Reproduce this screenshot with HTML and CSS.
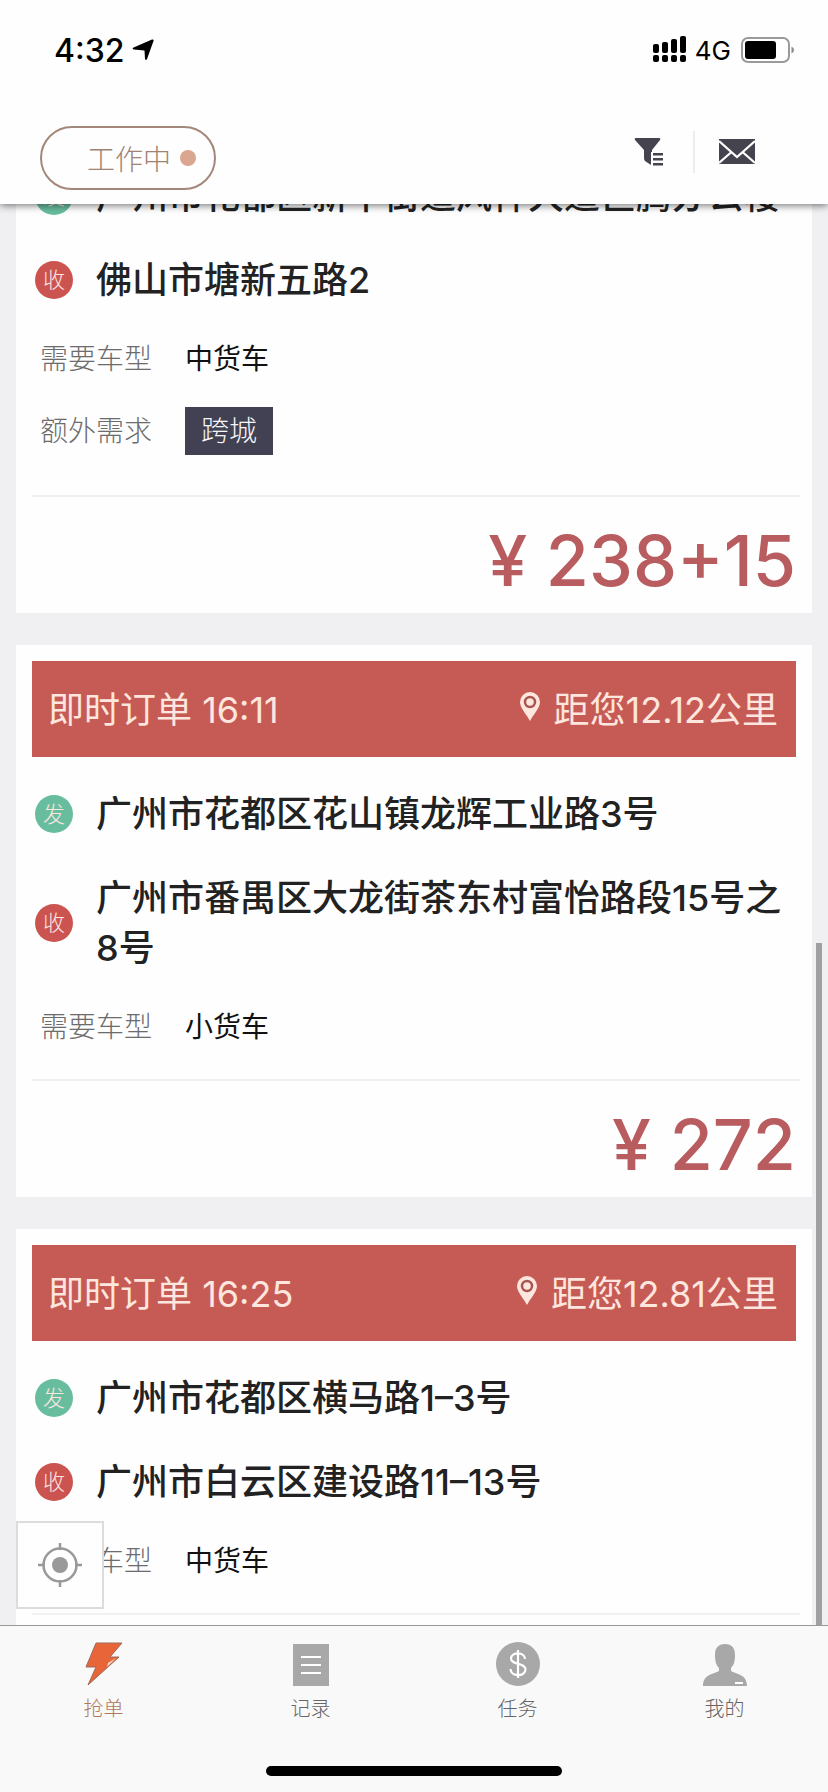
FILE: index.html
```html
<!DOCTYPE html>
<html lang="zh-CN">
<head>
<meta charset="utf-8">
<meta name="viewport" content="width=device-width, initial-scale=1">
<title>抢单</title>
<link rel="stylesheet" href="styles.css">
</head>
<body>
<div class="app">
  <header class="top">
    <div class="status">
      <span class="time">4:32</span>
      <svg class="arrow" width="22" height="22" viewBox="0 0 22 22"><path d="M20 .500Q22 0 21.500 2L15 20Q14 22 13 20L12.500 11.500 1.800 10.500Q-.500 9.500 1.600 8.400Z"/></svg>
      <svg class="signal" width="34" height="28" viewBox="0 0 34 28"><rect x="0" y="8" width="6" height="9" rx="2"/><rect x="9" y="6" width="6" height="11" rx="2"/><rect x="18" y="3" width="6" height="14" rx="2"/><rect x="27" y="0" width="6" height="17" rx="2"/><rect x="0" y="19" width="6" height="7" rx="2"/><rect x="9" y="19" width="6" height="7" rx="2"/><rect x="18" y="19" width="6" height="7" rx="2"/><rect x="27" y="19" width="6" height="7" rx="2"/></svg>
      <span class="network">4G</span>
      <svg width="54" height="26" viewBox="0 0 54 26"><rect x="1" y="1" width="47" height="24" rx="6" fill="#fff" stroke="#9a9a9a" stroke-width="2"/><rect x="4" y="4" width="31" height="18" rx="3"/><path d="M50.500 9.500Q53 10.500 53 13T50.500 16.500Z" fill="#8a8a8a"/></svg>
    </div>
    <div class="toolbar">
      <button class="work" type="button">工作中<span class="dot"></span></button>
      <button class="tool" type="button" aria-label="筛选"><svg width="30" height="30" viewBox="0 0 30 30" fill="#45434e"><path d="M2 1H25Q27 1 26 3L18 13V15H17V28L11 24Q10 23 10 21V13L1 3Q0 1 2 1Z"/><path d="M19 16H29V18.500H19ZM19 21H29V23.500H19ZM19 26H29V28.500H19Z"/></svg></button>
      <span class="rule"></span>
      <button class="tool" type="button" aria-label="消息"><svg width="36" height="26" viewBox="0 0 36 26"><path d="M0 0H36V25H0Z" fill="#45434e"/><path d="M0 2 18 18 36 2M0 24 12.500 13M36 24 23.500 13" fill="none" stroke="#fff" stroke-width="2.200"/></svg></button>
    </div>
  </header>

  <main class="feed">
    <div class="list">
      <article class="card card-first">
        <div class="stops">
          <div class="stop"><span class="badge from">发</span><p class="addr">广州市花都区新华街道风神大道巨腾办公楼</p></div>
          <div class="stop"><span class="badge to">收</span><p class="addr">佛山市塘新五路2</p></div>
        </div>
        <dl class="meta">
          <div class="row"><dt>需要车型</dt><dd>中货车</dd></div>
          <div class="row row-tags"><dt>额外需求</dt><dd><span class="tag">跨城</span></dd></div>
        </dl>
        <p class="price">¥ 238+15</p>
      </article>

      <article class="card">
        <h2 class="head"><span>即时订单 16:11</span><span class="dist"><svg width="20" height="30" viewBox="0 0 20 30"><path d="M10 0A10 10 0 0 1 20 10C20 16 13 23 10 29C7 23 0 16 0 10A10 10 0 0 1 10 0Z" fill="#fde6de"/><circle cx="10" cy="10" r="5" fill="none" stroke="#a8564f" stroke-width="2.500"/></svg>距您12.12公里</span></h2>
        <div class="stops">
          <div class="stop"><span class="badge from">发</span><p class="addr">广州市花都区花山镇龙辉工业路3号</p></div>
          <div class="stop"><span class="badge to">收</span><p class="addr">广州市番禺区大龙街茶东村富怡路段15号之8号</p></div>
        </div>
        <dl class="meta">
          <div class="row"><dt>需要车型</dt><dd>小货车</dd></div>
        </dl>
        <p class="price">¥ 272</p>
      </article>

      <article class="card">
        <h2 class="head"><span>即时订单 16:25</span><span class="dist"><svg width="20" height="30" viewBox="0 0 20 30"><path d="M10 0A10 10 0 0 1 20 10C20 16 13 23 10 29C7 23 0 16 0 10A10 10 0 0 1 10 0Z" fill="#fde6de"/><circle cx="10" cy="10" r="5" fill="none" stroke="#a8564f" stroke-width="2.500"/></svg>距您12.81公里</span></h2>
        <div class="stops">
          <div class="stop"><span class="badge from">发</span><p class="addr">广州市花都区横马路1–3号</p></div>
          <div class="stop"><span class="badge to">收</span><p class="addr">广州市白云区建设路11–13号</p></div>
        </div>
        <dl class="meta">
          <div class="row"><dt>需要车型</dt><dd>中货车</dd></div>
        </dl>
        <div class="price"></div>
      </article>
    </div>
    <span class="thumb"></span>
    <button class="locate" type="button" aria-label="定位"><svg width="46" height="46" viewBox="0 0 46 46"><circle cx="23" cy="23" r="16.500" fill="none" stroke="#999" stroke-width="2.500"/><circle cx="23" cy="23" r="8" fill="#999"/><path d="M23 1V8M23 38V45M1 23H8M38 23H45" stroke="#999" stroke-width="2.500"/></svg></button>
  </main>

  <footer class="bottom">
    <nav class="tabs">
      <a class="tab active" href="#"><svg width="44" height="44" viewBox="0 0 44 44"><path d="M14 1H40L28 15H37L6 43L14 25H4Z" fill="#e8653a" stroke="#9c6c58" stroke-width="1"/><path d="M26 21 34 16 25 25" fill="#fbd9c8"/></svg>抢单</a>
      <a class="tab" href="#"><svg width="44" height="44" viewBox="0 0 44 44"><path d="M4 2H40V44H4Z" fill="#a8a8a8"/><path d="M12 15H32M12 23H32M12 31H32" stroke="#fff" stroke-width="2"/></svg>记录</a>
      <a class="tab" href="#"><svg width="44" height="44" viewBox="0 0 44 44"><circle cx="22" cy="22" r="22" fill="#a8a8a8"/><path d="M22 8V36M29 17C29 9.500 15 9.500 15 16.500C15 23 29.500 20.500 29.500 27.500C29.500 35 14.500 35 14.500 27" fill="none" stroke="#fff" stroke-width="2.200"/></svg>任务</a>
      <a class="tab" href="#"><svg width="44" height="44" viewBox="0 0 44 44"><path d="M22 2C29 2 32 6 32 13C32 19 31 23 28 26V29C33 32 44 32 44 44H0C0 32 11 32 16 29V26C13 23 12 19 12 13C12 6 15 2 22 2Z" fill="#a8a8a8"/><path d="M32 41H40" stroke="#fff" stroke-width="2"/></svg>我的</a>
    </nav>
    <div class="home"></div>
  </footer>
</div>
</body>
</html>
```
FILE: styles.css
```css
* { box-sizing: border-box; margin: 0; }
body {
  background: #f0f0f3;
  color: #222;
  font-family: Inter, "Noto Sans CJK SC", sans-serif;
}
button { padding: 0; border: 0; background: none; font: inherit; color: inherit; }
svg { display: block; flex: none; }

.app { display: flex; flex-direction: column; height: 100vh; }

.top {
  position: relative;
  z-index: 2;
  background: #fefefe;
  padding-bottom: 14px;
  box-shadow: 0 1px 8px rgba(0, 0, 0, .6);
}
.status {
  display: flex;
  align-items: center;
  height: 100px;
  padding: 0 33px 0 54px;
  color: #000;
}
.time { font-size: 32px; font-weight: 500; }
.arrow { margin-left: 8px; }
.signal { margin-left: auto; }
.network { margin: 0 10px 0 8px; font-size: 26px; font-weight: 400; }

.toolbar {
  display: flex;
  align-items: center;
  padding: 26px 73px 0 40px;
}
.work {
  display: flex;
  align-items: center;
  justify-content: flex-end;
  gap: 9px;
  width: 176px;
  height: 64px;
  margin-right: auto;
  padding-right: 18px;
  border: 2px solid #a3877b;
  border-radius: 32px;
  color: #a08373;
  font-size: 28px;
  font-weight: 300;
}
.dot { width: 16px; height: 16px; border-radius: 50%; background: #dba68f; }
.tool { margin-bottom: 12px; }
.rule { width: 2px; height: 42px; margin: 0 24px 12px 29px; background: #ececec; }

.feed { position: relative; flex: 1; min-height: 0; overflow: hidden; }
.list { display: flex; flex-direction: column; gap: 32px; padding: 0 16px; }
.card { padding: 16px 16px 0; background: #fefefe; }
.card-first { margin-top: -65px; padding-top: 0; }
.head {
  display: flex;
  align-items: center;
  justify-content: space-between;
  height: 96px;
  padding: 0 18px 4px 16px;
  background: #c65b55;
  color: #fde6de;
  font-size: 36px;
  font-weight: 400;
}
.dist { display: flex; align-items: center; gap: 14px; }
.stops { display: flex; flex-direction: column; gap: 34px; padding: 32px 0 34px; }
.stop { display: flex; align-items: center; gap: 23px; padding-left: 3px; }
.badge {
  flex: none;
  width: 38px;
  height: 38px;
  border-radius: 50%;
  color: #fbe6e0;
  font-size: 22px;
  font-weight: 300;
  line-height: 38px;
  text-align: center;
}
.from { background: #68bd9f; }
.to { background: #cb5450; }
.addr { font-size: 36px; font-weight: 500; line-height: 50px; }
.meta {
  display: flex;
  flex-direction: column;
  gap: 28px;
  padding: 0 0 32px 8px;
  font-size: 28px;
  line-height: 40px;
}
.row { display: flex; align-items: center; gap: 33px; }
.row-tags { padding-bottom: 8px; }
dt { color: #6c6c6c; font-weight: 300; }
dd { color: #111; }
.tag {
  display: block;
  padding: 0 16px;
  background: #424153;
  color: #f6f6f8;
  font-weight: 300;
  line-height: 48px;
}
.price {
  margin-right: -4px;
  padding: 20px 4px 8px;
  border-top: 2px solid #f1f1f1;
  color: #b85c60;
  font-size: 70px;
  font-weight: 500;
  line-height: 88px;
  text-align: right;
}
.thumb {
  position: absolute;
  right: 6px;
  top: 52%;
  bottom: 0;
  width: 6px;
  background: #a0a0a2;
}
.locate {
  position: absolute;
  left: 16px;
  bottom: 16px;
  display: grid;
  place-items: center;
  width: 88px;
  height: 88px;
  border: 2px solid #dcdcdc;
  background: #fefefe;
}

.bottom { padding-bottom: 16px; border-top: 1px solid #999; background: #f9f9f9; }
.tabs { display: grid; grid-template-columns: repeat(4, 1fr); padding-top: 16px; }
.tab {
  display: flex;
  flex-direction: column;
  align-items: center;
  gap: 8px;
  color: #666;
  font-size: 20px;
  font-weight: 300;
  line-height: 30px;
  text-decoration: none;
}
.active { color: #b07858; }
.home { width: 296px; height: 10px; margin: 42px auto 0; border-radius: 5px; background: #000; }
```
